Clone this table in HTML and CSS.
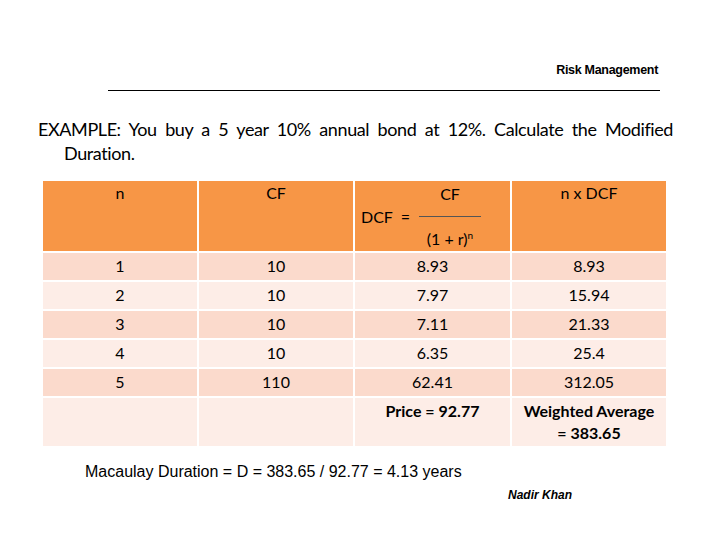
FILE: index.html
```html
<!DOCTYPE html>
<html>
<head>
<meta charset="utf-8">
<link rel="stylesheet" href="styles.css">
</head>
<body>
<div class="slide">
  <div class="running-head">Risk Management</div>
  <div class="rule"></div>
  <p class="title">EXAMPLE: You buy a 5 year 10% annual bond at 12%. Calculate the Modified Duration.</p>
  <div class="table">
    <div class="cell head">n</div>
    <div class="cell head">CF</div>
    <div class="cell head formula">
      <span class="dcf-label">DCF&nbsp; =</span>
      <span class="fraction">
        <span class="num">CF</span>
        <span class="bar"></span>
        <span class="den">(1 + r)<sup>n</sup></span>
      </span>
    </div>
    <div class="cell head">n x DCF</div>

    <div class="cell odd">1</div><div class="cell odd">10</div><div class="cell odd">8.93</div><div class="cell odd">8.93</div>
    <div class="cell even">2</div><div class="cell even">10</div><div class="cell even">7.97</div><div class="cell even">15.94</div>
    <div class="cell odd">3</div><div class="cell odd">10</div><div class="cell odd">7.11</div><div class="cell odd">21.33</div>
    <div class="cell even">4</div><div class="cell even">10</div><div class="cell even">6.35</div><div class="cell even">25.4</div>
    <div class="cell odd">5</div><div class="cell odd">110</div><div class="cell odd">62.41</div><div class="cell odd">312.05</div>
    <div class="cell even"></div><div class="cell even"></div><div class="cell even total">Price = 92.77</div><div class="cell even total">Weighted Average<br>= 383.65</div>
  </div>
  <p class="result">Macaulay Duration = D = 383.65 / 92.77 = 4.13 years</p>
  <p class="author">Nadir Khan</p>
</div>
</body>
</html>
```
FILE: styles.css
```css
html, body {
  margin: 0;
  padding: 0;
  background: #ffffff;
}
.slide {
  width: 720px;
  height: 540px;
  font-family: "Lato", "Open Sans", sans-serif;
  color: #000;
}
.running-head {
  padding-top: 63px;
  width: 658px;
  text-align: right;
  font-family: "Liberation Sans", Arial, sans-serif;
  font-weight: bold;
  font-size: 12.5px;
  letter-spacing: -0.3px;
  line-height: 14px;
}
.rule {
  margin: 13px 0 0 108px;
  width: 552px;
  height: 1px;
  background: #000;
}
.title {
  margin: 26px 0 0 38px;
  width: 609px;
  padding-left: 26px;
  text-indent: -26px;
  font-size: 18px;
  letter-spacing: -0.4px;
  line-height: 24px;
  text-align: justify;
}
.table {
  margin: 16px 0 0 43px;
  display: grid;
  grid-template-columns: 154px 154px 155px 154px;
  grid-template-rows: 70px 27px 27px 27px 27px 27px 48px;
  gap: 2px;
  width: 623px;
}
.cell {
  font-size: 16px;
  line-height: 22px;
  text-align: center;
  padding-top: 2px;
  box-sizing: border-box;
}
.head {
  background: #f79646;
  padding-top: 1px;
}
.odd { background: #fbdacc; }
.even { background: #fdede7; }
.total {
  font-weight: bold;
  padding-top: 2px;
}
.formula {
  display: flex;
  align-items: center;
  padding: 1px 0 0 6px;
  text-align: left;
}
.dcf-label {
  margin-right: 9px;
}
.fraction {
  display: flex;
  flex-direction: column;
  align-items: center;
  width: 62px;
}
.num, .den {
  height: 22px;
  line-height: 22px;
}
.bar {
  width: 62px;
  height: 1px;
  background: #555;
  margin: 11px 0;
}
.den sup {
  font-size: 10px;
  line-height: 0;
}
.result {
  margin: 16px 0 0 85px;
  font-family: "Liberation Sans", Arial, sans-serif;
  font-size: 16px;
  line-height: 19px;
}
.author {
  margin: 7px 0 0 508px;
  font-family: "Liberation Sans", Arial, sans-serif;
  font-weight: bold;
  font-style: italic;
  font-size: 12px;
  line-height: 14px;
}
```
